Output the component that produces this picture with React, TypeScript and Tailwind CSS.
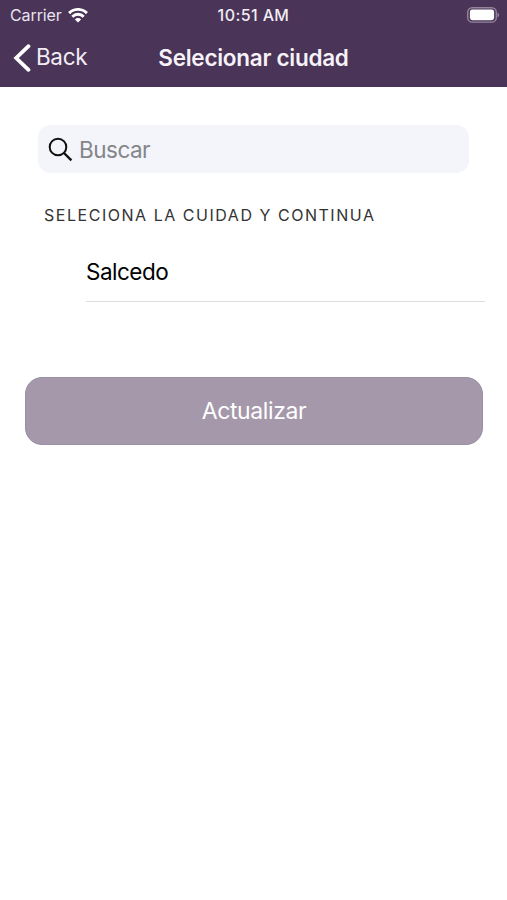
import React, { useState } from 'react';

const CITIES = ['Salcedo'];

const WifiIcon: React.FC = () => (
  <svg width="20" height="15" viewBox="0 0 20 15" fill="none" stroke="#fff" strokeWidth="2.9">
    <path d="M1.1 5.1a12.6 12.6 0 0 1 17.8 0" />
    <path d="M4.3 8.7a8 8 0 0 1 11.4 0" />
    <path d="M10 14.5 6.9 11.4a4.4 4.4 0 0 1 6.2 0Z" fill="#fff" stroke="none" />
  </svg>
);

const BatteryIcon: React.FC = () => (
  <svg width="33" height="17" viewBox="0 0 33 17" fill="none">
    <rect x="0.7" y="0.7" width="28.6" height="14.4" rx="4.6" stroke="#fff" strokeOpacity="0.4" strokeWidth="1.4" />
    <rect x="2.9" y="2.4" width="24.2" height="10.8" rx="2.4" fill="#fff" />
    <path d="M30.6 5.4c1.9.8 1.9 4.2 0 5Z" fill="#fff" fillOpacity="0.45" />
  </svg>
);

const App: React.FC = () => {
  const [query, setQuery] = useState('');
  const cities = CITIES.filter((city) => city.toLowerCase().includes(query.toLowerCase()));

  return (
    <div className="flex h-screen w-full flex-col overflow-hidden bg-white font-['Inter',sans-serif] text-black">
      <header className="h-[87px] shrink-0 bg-[#4a3458] text-white">
        {/* Status bar */}
        <div className="grid h-[30px] grid-cols-3 items-center px-[7px] text-[16px] leading-[30px]">
          <div className="flex items-center gap-[6px] pl-[3px] text-[#e9e3ee]">
            <span className="tracking-[-0.1px]">Carrier</span>
            <WifiIcon />
          </div>
          <span className="text-center font-medium tracking-[0.4px] whitespace-nowrap text-[#f1ecf4]">10:51 AM</span>
          <div className="flex justify-end">
            <BatteryIcon />
          </div>
        </div>

        {/* Navigation bar */}
        <div className="grid h-[57px] grid-cols-[1fr_auto_1fr] items-start px-[13px]">
          <button className="flex h-[55px] items-center gap-[5px] text-[22.5px] tracking-[-0.35px] text-[#f1ecf4]">
            <svg width="18" height="28" viewBox="0 0 18 28" fill="none" stroke="#fff" strokeWidth="3.8" strokeLinecap="round" strokeLinejoin="miter">
              <path d="M15.5 2.2 3.2 14l12.3 11.8" />
            </svg>
            <span className="pb-[2px]">Back</span>
          </button>
          <h1 className="text-[22.5px] leading-[56px] font-semibold tracking-[-0.27px] whitespace-nowrap text-[#f6f2f8]">Selecionar ciudad</h1>
        </div>
      </header>

      <main>
        <label className="mt-[38px] mr-[38px] ml-[38px] flex h-[48px] items-center gap-[7px] rounded-[13px] bg-[#f3f5fa] pl-[10px]">
          <svg width="25" height="25" viewBox="0 0 25 25" fill="none" stroke="#111" strokeWidth="2">
            <circle cx="10" cy="10" r="8.3" />
            <path d="m16 16 7.4 7.4" strokeWidth="2.4" />
          </svg>
          <input
            className="-ml-px w-[300px] bg-transparent pt-[2px] text-[22.5px] tracking-[-0.5px] outline-none placeholder:text-[#85858a]"
            placeholder="Buscar"
            value={query}
            onChange={(e) => setQuery(e.target.value)}
          />
        </label>

        <h2 className="mt-[32px] ml-[44px] text-[16px] leading-[20px] tracking-[1.53px] whitespace-nowrap text-[#333] uppercase">
          Seleciona la cuidad y continua
        </h2>

        <ul className="mt-[18px] mr-[22px] ml-[86px]">
          {cities.map((city) => (
            <li key={city} className="h-[59px] border-b border-[#dedee0] text-[22.5px] leading-[58px] tracking-[-0.5px]">
              {city}
            </li>
          ))}
        </ul>

        <button className="mt-[75px] ml-[25px] h-[68px] w-[458px] rounded-[17px] border border-[#9a90a6] bg-[#a498aa] text-[23px] tracking-[-0.4px] text-white">
          Actualizar
        </button>
      </main>
    </div>
  );
};

export default App;
